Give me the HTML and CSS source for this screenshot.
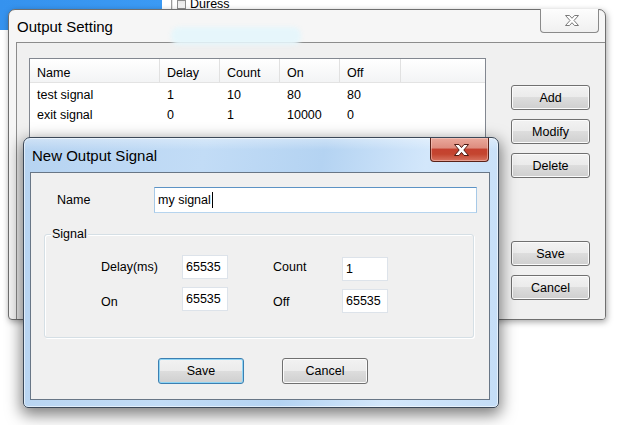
FILE: index.html
```html
<!DOCTYPE html>
<html>
<head>
<meta charset="utf-8">
<link rel="stylesheet" href="styles.css">
</head>
<body>
<div class="desk">
  <div class="bg-bar"></div>
  <div class="bg-col"><span class="bg-check"></span><span class="bg-text">Duress</span></div>

  <div class="win win-out">
    <div class="glass-blob"></div>
    <div class="titlebar"><span>Output Setting</span></div>
    <button class="close close-gray">
      <svg width="16" height="13" viewBox="0 0 16 13"><path d="M1.5 1.5 H5.5 L8 4.3 L10.5 1.5 H14.5 L10 6.5 L14.5 11.5 H10.5 L8 8.7 L5.5 11.5 H1.5 L6 6.5 Z" fill="#fff" stroke="#7a7a7a" stroke-width="1" stroke-linejoin="round"/></svg>
    </button>
    <div class="client-out">
      <div class="list">
        <div class="lrow lhead">
          <span class="c1">Name</span><span class="c2">Delay</span><span class="c3">Count</span><span class="c4">On</span><span class="c5">Off</span><span class="cf"></span>
        </div>
        <div class="lrow">
          <span class="c1">test signal</span><span class="c2">1</span><span class="c3">10</span><span class="c4">80</span><span class="c5">80</span>
        </div>
        <div class="lrow">
          <span class="c1">exit signal</span><span class="c2">0</span><span class="c3">1</span><span class="c4">10000</span><span class="c5">0</span>
        </div>
      </div>
      <div class="btncol">
        <button class="btn btn-side">Add</button>
        <button class="btn btn-side">Modify</button>
        <button class="btn btn-side">Delete</button>
        <button class="btn btn-side gap-big">Save</button>
        <button class="btn btn-side">Cancel</button>
      </div>
    </div>
  </div>

  <div class="win dlg">
    <div class="titlebar dlg-title"><span>New Output Signal</span></div>
    <button class="close close-red">
      <svg width="17" height="14" viewBox="0 0 17 14"><path d="M1.5 1.5 H6 L8.5 4.6 L11 1.5 H15.5 L10.8 7 L15.5 12.5 H11 L8.5 9.4 L6 12.5 H1.5 L6.2 7 Z" fill="#fff" stroke="#4e1a12" stroke-width="1" stroke-linejoin="round"/></svg>
    </button>
    <div class="dlg-client">
      <div class="name-row">
        <span class="name-label">Name</span>
        <div class="edit name-edit">my signal<span class="caret"></span></div>
      </div>
      <div class="group">
        <div class="group-label">Signal</div>
        <div class="fields">
          <span class="flabel">Delay(ms)</span>
          <div class="edit num">65535</div>
          <span class="flabel">Count</span>
          <div class="edit num r">1</div>
          <span class="flabel l2">On</span>
          <div class="edit num">65535</div>
          <span class="flabel l2">Off</span>
          <div class="edit num r">65535</div>
        </div>
      </div>
      <div class="dlg-btns">
        <button class="btn btn-dlg btn-focus">Save</button>
        <button class="btn btn-dlg">Cancel</button>
      </div>
    </div>
  </div>
</div>
</body>
</html>
```

FILE: styles.css
```css
* { box-sizing: border-box; }

body {
  margin: 0;
  background: #fff;
  font-family: "Liberation Sans", Arial, sans-serif;
  font-size: 12.5px;
  color: #000;
}

.desk {
  position: relative;
  width: 625px;
  height: 425px;
  overflow: hidden;
  background: #fff;
}

/* background window remnants */
.bg-bar {
  position: absolute;
  left: 0;
  top: 0;
  width: 162px;
  height: 30px;
  background: linear-gradient(90deg, #3592ee, #3b9af4);
}

.bg-col {
  position: absolute;
  left: 171px;
  top: -4px;
  height: 16px;
  display: flex;
  align-items: center;
  padding-left: 5px;
  border-left: 1px solid #9c9c9c;
  box-shadow: inset 1px 0 0 #e4e4e4;
}

.bg-check {
  width: 9px;
  height: 9px;
  border: 1px solid #8f8f8f;
  background: linear-gradient(#e6e6e6, #fafafa);
}

.bg-text { margin-left: 4px; }

/* windows */
.win {
  position: absolute;
  display: flex;
  flex-direction: column;
}

.win-out {
  left: 8px;
  top: 9px;
  width: 598px;
  height: 311px;
  border: 1px solid #6f6f6f;
  border-radius: 7px 7px 4px 4px;
  background: #f6f6f6;
  box-shadow: 1px 2px 6px rgba(0, 0, 0, 0.35);
}

.glass-blob {
  position: absolute;
  left: 162px;
  top: 17px;
  width: 130px;
  height: 18px;
  border-radius: 8px;
  background: #e6f6fb;
  filter: blur(2px);
}

.titlebar {
  position: relative;
  flex: none;
  height: 32px;
  display: flex;
  align-items: center;
  padding-left: 8px;
  font-size: 15px;
}

.close {
  position: absolute;
  top: -1px;
  width: 59px;
  height: 24px;
  padding: 0;
  border-radius: 0 0 4px 4px;
  display: flex;
  align-items: center;
  justify-content: center;
}

.close-gray {
  right: 6px;
  border: 1px solid #8a8a8a;
  border-top: none;
  background: linear-gradient(#fdfdfd, #f0f0f0);
}

.close-gray svg { margin-left: 4px; }

.client-out {
  flex: 1;
  margin-left: 7px;
  border-top: 1px solid #8c8c8c;
  border-left: 1px solid #8c8c8c;
  background: #f0f0f0;
  display: flex;
  align-items: flex-start;
  gap: 25px;
  padding: 15px 0 0 12px;
  border-bottom-right-radius: 3px;
}

.list {
  width: 457px;
  height: 180px;
  border: 1px solid #828790;
  background: #fff;
}

.lrow {
  display: flex;
  height: 20px;
  align-items: center;
  padding-top: 3px;
}

.lrow span { padding-left: 7px; flex: none; }

.lhead {
  height: 24px;
  padding-top: 0;
  align-items: stretch;
  border-bottom: 1px solid #e3e3e3;
  background: linear-gradient(#ffffff, #f3f4f5);
}

.lhead span {
  display: flex;
  align-items: center;
  padding-top: 4px;
  border-right: 1px solid #e1e1e1;
}

.lhead .cf { border-right: none; flex: 1; }

.c1 { width: 130px; }
.c2 { width: 60px; }
.c3 { width: 60px; }
.c4 { width: 60px; }
.c5 { width: 61px; }

.btncol {
  display: flex;
  flex-direction: column;
  gap: 9px;
  margin-top: 27px;
}

.btn {
  font-family: inherit;
  font-size: 12.5px;
  color: #000;
  padding: 0;
  border: 1px solid #707070;
  border-radius: 3px;
  background: linear-gradient(#f2f2f2 0%, #ebebeb 49%, #dddddd 50%, #cfcfcf 100%);
  box-shadow: inset 0 0 0 1px #fbfbfb;
}

.btn-side {
  width: 79px;
  height: 25px;
}

.gap-big { margin-top: 54px; }

/* dialog */
.dlg {
  left: 23px;
  top: 137px;
  width: 476px;
  height: 271px;
  border: 1px solid #3b4858;
  border-radius: 7px 7px 5px 5px;
  background:
    linear-gradient(180deg, rgba(255, 255, 255, 0.35) 0, rgba(255, 255, 255, 0) 12px),
    linear-gradient(100deg, #b6d3f1 0%, #c2dcf6 35%, #b4d3f2 58%, #d3e7fb 78%, #c4ddf7 100%);
  box-shadow: inset 0 0 0 1px rgba(255, 255, 255, 0.55), 0 5px 15px 2px rgba(0, 0, 0, 0.5);
}

.dlg-title { height: 34px; }

.close-red {
  right: 9px;
  top: 0;
  border: 1px solid #5a2219;
  border-top: none;
  background: linear-gradient(#eaa99c 0%, #de8d7f 42%, #c5412f 50%, #c4452f 70%, #d77360 100%);
  box-shadow: inset 0 0 0 1px rgba(255, 220, 210, 0.45);
}

.close-red svg { margin-left: 3px; }

.dlg-client {
  flex: 1;
  margin: 0 8px 7px 6px;
  border: 1px solid #687686;
  background: #f0f0f0;
  padding-top: 14px;
}

.name-row {
  display: flex;
  align-items: center;
  padding-left: 26px;
}

.name-label { width: 97px; }

.edit {
  background: #fff;
  border: 1px solid #dde3ea;
  display: flex;
  align-items: center;
  padding-left: 3px;
}

.name-edit {
  width: 323px;
  height: 26px;
  border-color: #5d93c5 #a7c9e7 #b6d4ee #a7c9e7;
}

.caret {
  display: inline-block;
  width: 1px;
  height: 16px;
  margin-left: 1px;
  background: #000;
}

.group {
  margin: 21px 0 0 13px;
  width: 430px;
  height: 104px;
  border: 1px solid #d5dfe5;
  border-radius: 3px;
  box-shadow: inset 1px 1px 0 #fff, 1px 1px 0 #fff;
}

.group-label {
  display: table;
  margin: -8px 0 0 6px;
  padding: 0 1px;
  line-height: 15px;
  background: #f0f0f0;
}

.fields {
  display: grid;
  grid-template-columns: 81px 91px 69px 46px;
  grid-template-rows: 24px 24px;
  row-gap: 8px;
  margin-top: 13px;
  padding-left: 56px;
}

.flabel { align-self: center; }
.flabel.l2 { margin-top: 6px; }

.num {
  width: 46px;
  height: 24px;
}

.num.r { margin-top: 2px; }

.dlg-btns {
  display: flex;
  gap: 38px;
  margin: 20px 0 0 127px;
}

.btn-dlg {
  width: 86px;
  height: 26px;
}

.btn-focus {
  border-color: #3c7fb1;
  box-shadow: inset 0 0 0 1px #8fd5f5;
}
```
